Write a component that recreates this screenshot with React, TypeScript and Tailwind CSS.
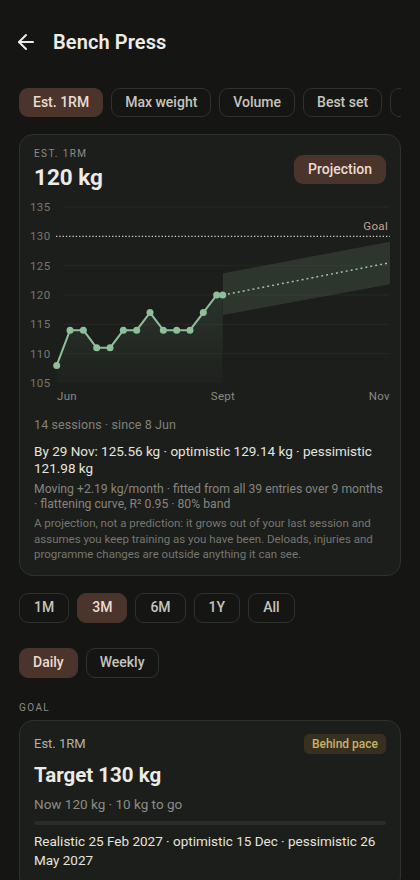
import { ArrowLeft } from 'lucide-react';

const tabs = ['Est. 1RM', 'Max weight', 'Volume', 'Best set', 'Reps'];
const ranges = ['1M', '3M', '6M', '1Y', 'All'];
const sessions = [108, 114, 114, 111, 111, 114, 114, 117, 114, 114, 114, 117, 120, 120];

const yOf = (v: number) => 101 - (v - 120) * 5.867;
const xOf = (i: number) => (i === 13 ? 202.7 : 36.7 + i * 13.33);

function Chart() {
  const pts = sessions.map((v, i) => [xOf(i), yOf(v)] as const);
  const line = pts.map(([x, y]) => `${x},${y}`).join(' ');
  const area = `36.7,189 ${line} 202.7,189`;
  return (
    <svg width="380" height="214" viewBox="0 0 380 214" className="-mx-[14px] mt-[3px] block">
      <defs>
        <linearGradient id="hist" x1="0" y1="0" x2="0" y2="1">
          <stop offset="0" stopColor="#8fbf98" stopOpacity="0.13" />
          <stop offset="1" stopColor="#8fbf98" stopOpacity="0.02" />
        </linearGradient>
      </defs>
      {[13, 71.7, 101, 130.3, 159.7].map((y) => (
        <line key={y} x1="44" x2="370" y1={y} y2={y} stroke="#262824" strokeWidth="1" />
      ))}
      {[135, 130, 125, 120, 115, 110, 105].map((v) => (
        <text key={v} x="10" y={yOf(v) + 4} fontSize="11.5" fill="#77776f" letterSpacing="0.4">
          {v}
        </text>
      ))}
      <polygon points={area} fill="url(#hist)" />
      <polygon points="203,79.3 370,47.7 370,90.3 203,121" fill="#86b48c" fillOpacity="0.16" />
      <line x1="36" x2="370" y1="42.3" y2="42.3" stroke="#d6cfc6" strokeWidth="1.3" strokeDasharray="1.3 2" />
      <text x="368" y="36" fontSize="11.5" fill="#c4a58f" textAnchor="end" letterSpacing="0.3">
        Goal
      </text>
      <line x1="203" y1="101" x2="370" y2="68.7" stroke="#9cc6a4" strokeWidth="1.5" strokeDasharray="2 3" />
      <polyline points={line} fill="none" stroke="#8fbf98" strokeWidth="2" strokeLinejoin="round" />
      {pts.map(([x, y], i) => (
        <circle key={i} cx={x} cy={y} r="3.5" fill="#8fbf98" />
      ))}
      <text x="37" y="206" fontSize="11.5" fill="#8a8a82" letterSpacing="0.3">Jun</text>
      <text x="203" y="206" fontSize="11.5" fill="#8a8a82" textAnchor="middle" letterSpacing="0.3">Sept</text>
      <text x="370" y="206" fontSize="11.5" fill="#8a8a82" textAnchor="end" letterSpacing="0.3">Nov</text>
    </svg>
  );
}

function Chip({ label, active, className }: { label: string; active?: boolean; className?: string }) {
  return (
    <div
      className={`flex shrink-0 items-center justify-center rounded-[9px] border text-[14px] font-medium ${
        active ? 'border-[#4a342c] bg-[#4a342c] text-[#ecdcd0]' : 'border-[#30322e] text-[#c6c4bd]'
      } ${className ?? ''}`}
    >
      {label}
    </div>
  );
}

export default function App() {
  return (
    <div
      className="min-h-[880px] bg-[#151614] px-[19px] pt-[28px] text-[#ecebe6]"
      style={{ fontFamily: 'Roboto, "Noto Sans", sans-serif' }}
    >
      <div className="flex h-[28px] items-center">
        <ArrowLeft size={24} strokeWidth={2} className="-ml-[5px] text-[#ecebe6]" />
        <h1 className="ml-[15px] text-[20px] font-semibold tracking-[0.1px]">Bench Press</h1>
      </div>

      <div className="mt-[32px] flex gap-[8px] overflow-hidden">
        {tabs.map((t, i) => (
          <Chip key={t} label={t} active={i === 0} className="h-[29px] px-[13px]" />
        ))}
      </div>

      <div className="mt-[17px] rounded-[14px] border border-[#2f312d] bg-[#1c1e1b] px-[14px] pb-[12px] pt-[12px]">
        <div className="flex items-start justify-between">
          <div>
            <div className="text-[10px] leading-[14px] tracking-[1.4px] text-[#8d8c85]">EST. 1RM</div>
            <div className="mt-[2px] text-[22.5px] font-bold leading-[28px]">120 kg</div>
          </div>
          <div className="mt-[8px] flex h-[29px] items-center rounded-[9px] bg-[#4a342c] px-[14px] text-[14px] font-medium text-[#ecdcd0]">
            Projection
          </div>
        </div>

        <Chart />

        <div className="mt-[8px] text-[12.5px] leading-[18px] tracking-[0.1px] text-[#82817a]">14 sessions · since 8 Jun</div>
        <div className="mt-[9px] text-[13.5px] leading-[17px] text-[#e6e4de]">
          By 29 Nov: 125.56 kg · optimistic 129.14 kg · pessimistic 121.98 kg
        </div>
        <div className="mt-[5px] text-[12.2px] leading-[15px] text-[#85847d]">
          Moving +2.19 kg/month · fitted from all 39 entries over 9 months · flattening curve, R² 0.95 · 80% band
        </div>
        <div className="mt-[4px] text-[11.5px] leading-[15.5px] text-[#77766f]">
          A projection, not a prediction: it grows out of your last session and assumes you keep training as you have
          been. Deloads, injuries and programme changes are outside anything it can see.
        </div>
      </div>

      <div className="mt-[17px] flex gap-[8px]">
        {ranges.map((r) => (
          <Chip key={r} label={r} active={r === '3M'} className="h-[30px] px-[14px]" />
        ))}
      </div>

      <div className="mt-[25px] flex gap-[8px]">
        <Chip label="Daily" active className="h-[30px] px-[13px]" />
        <Chip label="Weekly" className="h-[30px] px-[13px]" />
      </div>

      <div className="mt-[23px] text-[10px] leading-[14px] tracking-[1.4px] text-[#8d8c85]">GOAL</div>

      <div className="mt-[5px] rounded-[14px] border border-[#2f312d] bg-[#1c1e1b] px-[14px] pb-[20px] pt-[13px]">
        <div className="flex items-center justify-between">
          <div className="text-[13px] leading-[20px] text-[#b3b0a9]">Est. 1RM</div>
          <div className="flex h-[20px] items-center rounded-[5px] bg-[#36311f] px-[8px] text-[12px] font-medium text-[#cbb06c]">
            Behind pace
          </div>
        </div>
        <div className="mt-[7px] text-[20.5px] font-bold leading-[28px]">Target 130 kg</div>
        <div className="mt-[5px] text-[13.5px] leading-[20px] text-[#8d8c85]">Now 120 kg · 10 kg to go</div>
        <div className="mt-[7px] h-[4px] rounded-full bg-[#2a2c28]" />
        <div className="mt-[7px] text-[13.5px] leading-[19px] text-[#e6e4de]">
          Realistic 25 Feb 2027 · optimistic 15 Dec · pessimistic 26 May 2027
        </div>
      </div>
    </div>
  );
}
